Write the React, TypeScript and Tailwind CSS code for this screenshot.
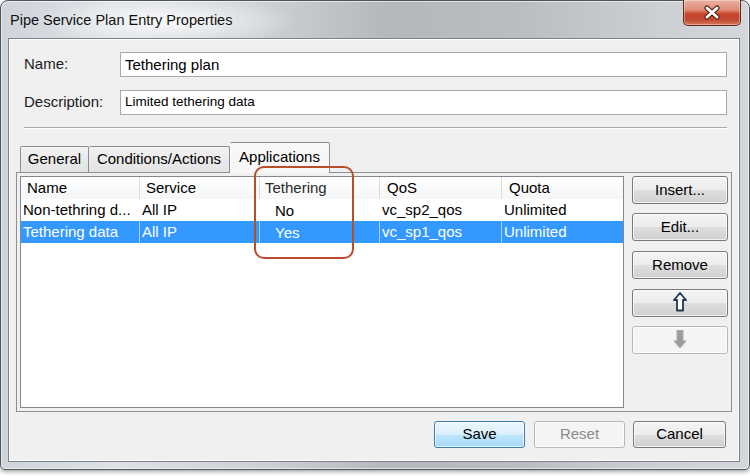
import type { ReactNode } from 'react'

const cols = [
  { label: 'Name', w: 'w-[119px]' },
  { label: 'Service', w: 'w-[120px]' },
  { label: 'Tethering', w: 'w-[120px]' },
  { label: 'QoS', w: 'w-[122px]' },
  { label: 'Quota', w: 'w-[121px]' },
]

const rows = [
  { cells: ['Non-tethring d...', 'All IP', 'No', 'vc_sp2_qos', 'Unlimited'], selected: false },
  { cells: ['Tethering data', 'All IP', 'Yes', 'vc_sp1_qos', 'Unlimited'], selected: true },
]

function WinButton({
  children,
  kind = 'normal',
  className = '',
}: {
  children: ReactNode
  kind?: 'normal' | 'default' | 'disabled'
  className?: string
}) {
  const look =
    kind === 'default'
      ? 'border-[#3c7fb1] bg-[linear-gradient(#eaf6fd_0%,#d9f0fc_50%,#bee6fd_51%,#a7d9f5_100%)] text-black'
      : kind === 'disabled'
        ? 'border-[#b5b8bb] bg-[#f4f4f4] text-[#8a8a8a]'
        : 'border-[#7a7a7a] bg-[linear-gradient(#f4f4f4_0%,#ececec_50%,#dedede_51%,#d0d0d0_100%)] text-black'
  return (
    <div
      className={`flex items-center justify-center rounded-[3px] border pb-[2px] text-[15px] leading-none shadow-[inset_0_0_0_1px_rgba(255,255,255,0.7)] ${look} ${className}`}
    >
      {children}
    </div>
  )
}

function CloseButton() {
  return (
    <div className="-mr-px -mt-px flex h-[26px] w-[58px] items-center justify-center rounded-b-[5px] border border-t-0 border-[#5e2a22] bg-[linear-gradient(#eab2a4_0%,#de8a74_40%,#c9452c_55%,#c24a33_80%,#d77a5f_100%)] shadow-[inset_0_0_0_1px_rgba(255,255,255,0.35)]">
      <svg width="18" height="15" viewBox="0 0 18 15">
        <path d="M4 3 L14 12 M14 3 L4 12" stroke="#4b1d16" strokeWidth="5" strokeLinecap="round" />
        <path d="M4 3 L14 12 M14 3 L4 12" stroke="#ffffff" strokeWidth="2.8" strokeLinecap="round" />
      </svg>
    </div>
  )
}

function UpArrow() {
  return (
    <svg width="14" height="20" viewBox="0 0 14 20">
      <path
        d="M7 1 L13 8 L10 8 L10 18.5 L4 18.5 L4 8 L1 8 Z"
        fill="#ffffff"
        stroke="#1f3550"
        strokeWidth="1.8"
        strokeLinejoin="round"
      />
    </svg>
  )
}

function DownArrow() {
  return (
    <svg width="14" height="20" viewBox="0 0 14 20">
      <path d="M4 1.5 L10 1.5 L10 12 L13 12 L7 19 L1 12 L4 12 Z" fill="#9c9c9c" stroke="#a8a8a8" strokeWidth="1" />
    </svg>
  )
}

export default function App() {
  return (
    <div className="h-[476px] w-[750px] bg-white font-['Liberation_Sans',Arial,sans-serif] text-black">
      <div className="flex h-[470px] flex-col rounded-t-[8px] rounded-b-[5px] border border-[#4f555c] bg-[radial-gradient(ellipse_130px_26px_at_165px_20px,rgba(255,255,255,0.85),rgba(255,255,255,0)),linear-gradient(90deg,#cfd4da_0%,#dde1e6_15%,#cdd1d6_35%,#b4b8bd_52%,#babec3_70%,#ccd0d5_88%,#d3d7dc_100%)] pb-[7px] pl-[7px] pr-[9px] shadow-[inset_0_0_0_1px_rgba(255,255,255,0.55),0_2px_4px_rgba(0,0,0,0.35)]">
        {/* title bar */}
        <div className="flex h-[37px] items-start justify-between">
          <span className="pl-[2px] pt-[10px] text-[14.5px] leading-[18px] text-[#111]">
            Pipe Service Plan Entry Properties
          </span>
          <CloseButton />
        </div>

        {/* client area */}
        <div className="relative flex flex-1 flex-col border border-[#7c828a] bg-[#f0f0f0] pt-[13px] shadow-[inset_0_0_0_1px_#ffffff]">
          <div className="flex h-[25px] items-center pl-[15px]">
            <span className="w-[96px] text-[15px] text-[#1a1a1a]">Name:</span>
            <div className="flex h-[25px] w-[607px] items-center border border-[#a5a9b0] bg-white pl-[4px] pt-[2px] text-[15px]">
              Tethering plan
            </div>
          </div>
          <div className="mt-[13px] flex h-[25px] items-center pl-[15px]">
            <span className="w-[96px] text-[15px] text-[#1a1a1a]">Description:</span>
            <div className="flex h-[25px] w-[607px] items-center border border-[#a5a9b0] bg-white pl-[4px] text-[13.5px]">
              Limited tethering data
            </div>
          </div>
          <div className="ml-[15px] mt-[12px] h-[2px] w-[703px] border-t border-b border-t-[#a9a9a9] border-b-white" />

          {/* tabs */}
          <div className="ml-[7px] mt-[13px] w-[716px]">
            <div className="flex h-[30px] items-end pl-[4px] text-[15px]">
              <div className="flex h-[26px] w-[69px] items-center justify-center rounded-t-[2px] border border-b-0 border-[#8c8f96] bg-[linear-gradient(#f2f2f2,#e3e3e3)]">
                General
              </div>
              <div className="flex h-[26px] w-[141px] items-center justify-center rounded-t-[2px] border border-b-0 border-l-0 border-[#8c8f96] bg-[linear-gradient(#f2f2f2,#e3e3e3)]">
                Conditions/Actions
              </div>
              <div className="relative z-10 -mb-px flex h-[31px] w-[100px] items-start justify-center rounded-t-[2px] border border-b-0 border-l-0 border-[#8c8f96] bg-[#f7f7f7] pt-[3px]">
                Applications
              </div>
            </div>
            <div className="flex h-[240px] items-start border border-[#8c8f96] bg-[#f0f0f0] p-[3px]">
              {/* table */}
              <div className="h-[232px] w-[604px] border border-[#828790] bg-white text-[15px]">
                <div className="flex h-[22px] bg-[linear-gradient(#ffffff,#f5f6f7)]">
                  {cols.map((c, i) => (
                    <div
                      key={c.label}
                      className={`${c.w} flex h-full border-r border-[#dcdcdc] ${
                        i === 2 ? 'items-start pl-[5px] text-[#2a2a2a]' : 'items-center pl-[6px] pt-[1px]'
                      } ${i === 4 ? 'border-r-0' : ''} ${i >= 3 ? 'pl-[7px]' : ''}`}
                    >
                      {c.label}
                    </div>
                  ))}
                </div>
                {rows.map((r) => (
                  <div
                    key={r.cells[0]}
                    className={`flex h-[22px] items-center ${r.selected ? 'bg-[#3399ff] text-white' : ''}`}
                  >
                    {r.cells.map((cell, i) => (
                      <div
                        key={i}
                        className={`${cols[i].w} flex h-full items-center whitespace-nowrap ${
                          i === 2 ? 'pl-[15px] pt-[2px]' : 'pl-[2px]'
                        } ${r.selected && i < 4 ? 'border-r border-[#a9d2fd]' : ''}`}
                      >
                        {cell}
                      </div>
                    ))}
                  </div>
                ))}
              </div>

              {/* side buttons */}
              <div className="ml-[8px] flex w-[96px] flex-col">
                <WinButton className="h-[28px]">Insert...</WinButton>
                <WinButton className="mt-[9px] h-[28px]">Edit...</WinButton>
                <WinButton className="mt-[10px] h-[28px]">Remove</WinButton>
                <WinButton className="mt-[10px] h-[28px]">
                  <UpArrow />
                </WinButton>
                <WinButton kind="disabled" className="mt-[9px] h-[28px]">
                  <DownArrow />
                </WinButton>
              </div>
            </div>
          </div>

          {/* bottom buttons */}
          <div className="mt-[9px] flex justify-end pr-[13px]">
            <WinButton kind="default" className="h-[27px] w-[91px]">
              Save
            </WinButton>
            <WinButton kind="disabled" className="ml-[9px] h-[27px] w-[91px]">
              Reset
            </WinButton>
            <WinButton className="ml-[8px] h-[27px] w-[93px]">Cancel</WinButton>
          </div>

          {/* annotation */}
          <div className="pointer-events-none absolute left-[245px] top-[127px] z-20 h-[93px] w-[100px] rounded-[10px] border-[2.5px] border-[#b94e2c]" />
        </div>
      </div>
    </div>
  )
}
